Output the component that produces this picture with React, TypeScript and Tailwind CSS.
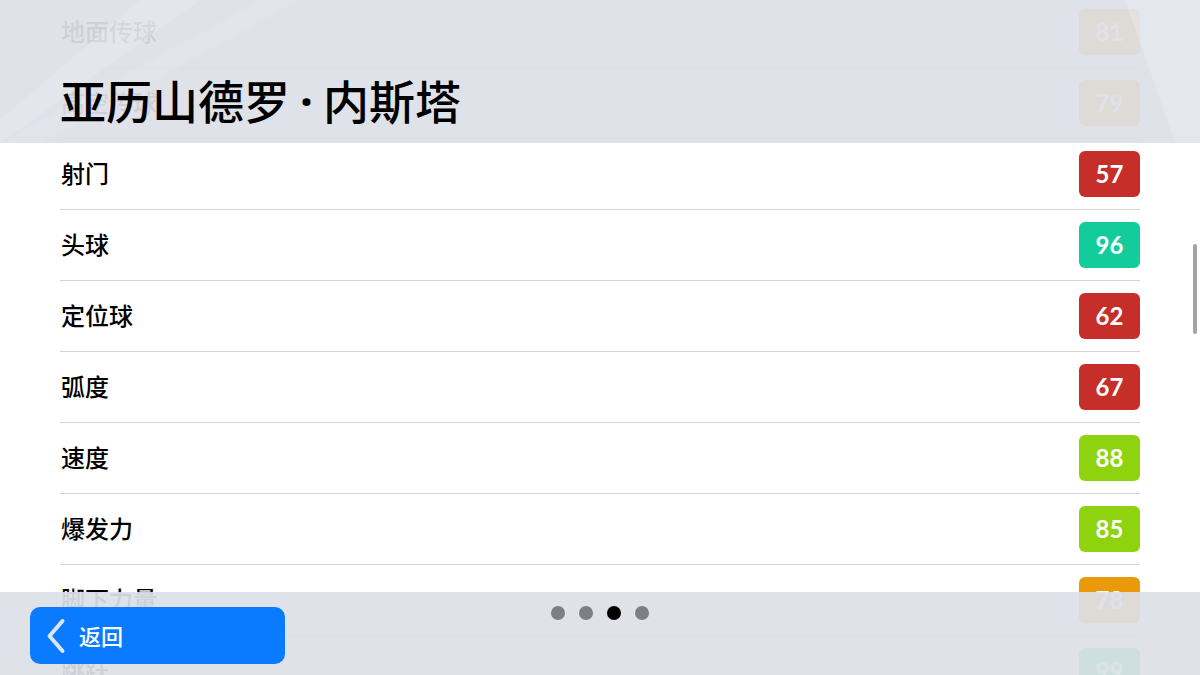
type Stat = { label: string; value: number; color: string }

const stats: Stat[] = [
  { label: '地面传球', value: 81, color: 'bg-[#e89a0b]' },
  { label: '高空传球', value: 79, color: 'bg-[#e89a0b]' },
  { label: '射门', value: 57, color: 'bg-[#c62f29]' },
  { label: '头球', value: 96, color: 'bg-[#13cc9b]' },
  { label: '定位球', value: 62, color: 'bg-[#c62f29]' },
  { label: '弧度', value: 67, color: 'bg-[#c62f29]' },
  { label: '速度', value: 88, color: 'bg-[#8fd30f]' },
  { label: '爆发力', value: 85, color: 'bg-[#8fd30f]' },
  { label: '脚下力量', value: 78, color: 'bg-[#e89a0b]' },
  { label: '跳跃', value: 99, color: 'bg-[#13cc9b]' },
]

const cjk = "font-['Noto_Sans_CJK_SC','Noto_Sans',sans-serif]"

function StatRow({ stat }: { stat: Stat }) {
  return (
    <div className="h-[71px] flex items-center justify-between border-b border-[#d2d3d8]">
      <span className={`${cjk} text-[24px] font-medium text-black pl-px pb-[3px]`}>{stat.label}</span>
      <span
        className={`${stat.color} w-[61px] h-[46px] rounded-[6px] flex items-center justify-center text-white text-[24px] font-bold font-['Lato','Noto_Sans',sans-serif]`}
      >
        {stat.value}
      </span>
    </div>
  )
}

function HeaderDecor() {
  return (
    <svg className="absolute inset-0 w-full h-full pointer-events-none" viewBox="0 0 1200 143" preserveAspectRatio="none">
      <path d="M0 120 L140 0 L200 0 L0 143 Z" fill="#ffffff" opacity="0.16" />
      <path d="M0 143 L260 0 L300 0 L40 143 Z" fill="#ffffff" opacity="0.08" />
      <path d="M1125 0 Q1150 70 1175 143 L1200 143 L1200 0 Z" fill="#ffffff" opacity="0.18" />
    </svg>
  )
}

export default function App() {
  return (
    <div className="relative w-[1200px] h-[675px] overflow-hidden bg-white">
      <div className="mt-[-3px] px-[60px]">
        {stats.map((s) => (
          <StatRow key={s.label} stat={s} />
        ))}
      </div>

      {/* scroll indicator */}
      <div className="absolute left-[1193px] top-[244px] w-[4px] h-[90px] rounded-full bg-[#a3a3a6]" />

      <header className="absolute inset-x-0 top-0 h-[143px] bg-[#dde0e7]/[0.93]">
        <HeaderDecor />
        <h1 className={`${cjk} absolute left-[60px] top-[76px] text-[46px] font-medium text-black leading-none whitespace-nowrap`}>
          亚历山德罗<span className="font-['Noto_Sans',sans-serif] font-bold mx-[10px]">·</span>内斯塔
        </h1>
      </header>

      <footer className="absolute inset-x-0 bottom-0 h-[83px] bg-[#dde0e7]/[0.93]">
        <div className="absolute left-0 right-0 top-[14px] flex justify-center gap-[14px]">
          <span className="w-[14px] h-[14px] rounded-full bg-[#7f7f83]" />
          <span className="w-[14px] h-[14px] rounded-full bg-[#7f7f83]" />
          <span className="w-[14px] h-[14px] rounded-full bg-black" />
          <span className="w-[14px] h-[14px] rounded-full bg-[#7f7f83]" />
        </div>
        <button className="absolute left-[30px] top-[15px] w-[255px] h-[57px] rounded-[10px] bg-[#0a7bff] flex items-center gap-[13px] pl-[16px] text-white">
          <svg width="20" height="36" viewBox="0 0 20 36" fill="none">
            <path d="M16.5 3 L3.5 18 L16.5 33" stroke="#d6e7ff" strokeWidth="4" strokeLinecap="round" strokeLinejoin="round" />
          </svg>
          <span className={`${cjk} text-[22px] font-medium`}>返回</span>
        </button>
      </footer>
    </div>
  )
}
